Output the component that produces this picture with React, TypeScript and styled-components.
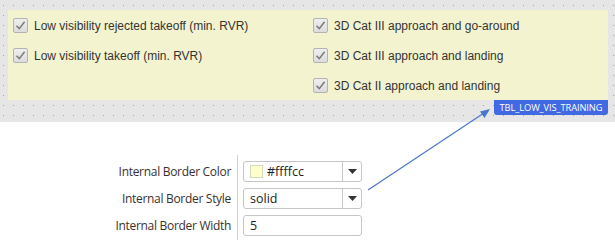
import React from "react";
import styled, { createGlobalStyle } from "styled-components";

const Global = createGlobalStyle`
  html, body { margin: 0; padding: 0; background: #ffffff; }
  body { width: 615px; height: 247px; overflow: hidden; }
`;

const Page = styled.div`
  position: relative;
  width: 615px;
  height: 247px;
`;

const Canvas = styled.div`
  height: 122px;
  box-sizing: border-box;
  padding: 10px 7px 0 8px;
  background-color: #e6e6e6;
  background-image: radial-gradient(circle at 3.5px 5.5px, #a9a9a9 0.6px, transparent 1px);
  background-size: 10px 10px;
  display: flex;
  flex-direction: column;
`;

const Panel = styled.div`
  height: 90px;
  box-sizing: border-box;
  background: #f3f3d0;
  padding: 8px 5px 0 5px;
  display: grid;
  grid-template-columns: 300px 1fr;
`;

const Column = styled.div`
  display: flex;
  flex-direction: column;
`;

const CheckRow = styled.label`
  height: 30px;
  display: flex;
  align-items: flex-start;
  gap: 6px;
  font-family: "Liberation Sans", Arial, sans-serif;
  font-size: 12px;
  color: #333333;
  line-height: 17px;
`;

const Box = styled.span`
  width: 15px;
  height: 15px;
  box-sizing: border-box;
  border: 1px solid #b3b3b3;
  border-radius: 2px;
  background: linear-gradient(#efefef, #dcdcdc);
  display: flex;
  align-items: center;
  justify-content: center;
  flex: none;
`;

const BadgeRow = styled.div`
  display: flex;
  justify-content: flex-end;
`;

const Badge = styled.div`
  width: 114px;
  height: 15px;
  background: #4169e1;
  border-radius: 0 0 3px 3px;
  color: #ffffff;
  font-family: "Open Sans", "Noto Sans", sans-serif;
  font-size: 9.3px;
  line-height: 15px;
  text-align: center;
  letter-spacing: -0.1px;
`;

const Props = styled.div`
  display: flex;
  padding-top: 33px;
`;

const Labels = styled.div`
  width: 231px;
  display: flex;
  flex-direction: column;
  align-items: flex-end;
  padding-top: 6px;
  gap: 6px;
`;

const Label = styled.div`
  height: 21px;
  line-height: 21px;
  font-family: "Open Sans", "Noto Sans", sans-serif;
  font-size: 12px;
  color: #3a3030;
  letter-spacing: -0.3px;
`;

const Separator = styled.div`
  width: 1px;
  height: 85px;
  background: #d2d2d2;
  margin-left: 6px;
`;

const Fields = styled.div`
  display: flex;
  flex-direction: column;
  gap: 6px;
  padding-top: 6px;
  margin-left: 5px;
`;

const Field = styled.div`
  width: 119px;
  height: 21px;
  box-sizing: border-box;
  border: 1px solid #c6c6c6;
  border-radius: 3px;
  background: #ffffff;
  display: flex;
  align-items: center;
  font-family: "Open Sans", "Noto Sans", sans-serif;
  font-size: 12.5px;
  color: #222;
`;

const Value = styled.div`
  flex: 1;
  display: flex;
  align-items: center;
  gap: 4px;
  padding-left: 6px;
`;

const Swatch = styled.span<{ $color: string }>`
  width: 13px;
  height: 13px;
  box-sizing: border-box;
  background: ${(p) => p.$color};
  border: 1px solid #d8d8c0;
`;

const DropButton = styled.div`
  width: 18px;
  height: 100%;
  border-left: 1px solid #c6c6c6;
  display: flex;
  align-items: center;
  justify-content: center;
`;

const Connector = styled.svg`
  position: absolute;
  left: 0;
  top: 0;
  pointer-events: none;
`;

const Check = () => (
  <svg width="11" height="11" viewBox="0 0 11 11">
    <path d="M1.5 5.8 L4.3 8.6 L9.6 1.8" fill="none" stroke="#7a7a7a" strokeWidth="1.5" />
  </svg>
);

const Caret = () => (
  <svg width="9" height="5" viewBox="0 0 9 5">
    <path d="M0 0 H9 L4.5 5 Z" fill="#333" />
  </svg>
);

const left = ["Low visibility rejected takeoff (min. RVR)", "Low visibility takeoff (min. RVR)"];
const right = [
  "3D Cat III approach and go-around",
  "3D Cat III approach and landing",
  "3D Cat II approach and landing",
];

const CheckItem = ({ text }: { text: string }) => (
  <CheckRow>
    <Box>
      <Check />
    </Box>
    <span>{text}</span>
  </CheckRow>
);

export default function App() {
  return (
    <Page>
      <Global />
      <Canvas>
        <Panel>
          <Column>
            {left.map((t) => (
              <CheckItem key={t} text={t} />
            ))}
          </Column>
          <Column>
            {right.map((t) => (
              <CheckItem key={t} text={t} />
            ))}
          </Column>
        </Panel>
        <BadgeRow>
          <Badge>TBL_LOW_VIS_TRAINING</Badge>
        </BadgeRow>
      </Canvas>
      <Props>
        <Labels>
          <Label>Internal Border Color</Label>
          <Label>Internal Border Style</Label>
          <Label>Internal Border Width</Label>
        </Labels>
        <Separator />
        <Fields>
          <Field>
            <Value>
              <Swatch $color="#ffffcc" />
              #ffffcc
            </Value>
            <DropButton>
              <Caret />
            </DropButton>
          </Field>
          <Field>
            <Value>solid</Value>
            <DropButton>
              <Caret />
            </DropButton>
          </Field>
          <Field>
            <Value>5</Value>
          </Field>
        </Fields>
      </Props>
      <Connector width="615" height="247">
        <line x1="368" y1="190" x2="484" y2="113" stroke="#4a76c9" strokeWidth="1.2" />
        <path d="M490 109 L480 111.5 L484.5 118 Z" fill="#4a76c9" />
      </Connector>
    </Page>
  );
}
